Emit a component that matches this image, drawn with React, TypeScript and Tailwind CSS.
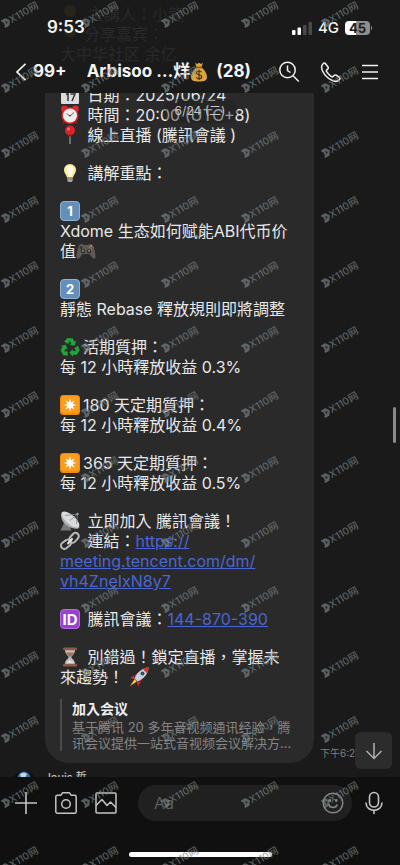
import type { ReactNode } from 'react'

function Emoji({ label, children }: { label: string; children: ReactNode }) {
  return (
    <svg viewBox="0 0 20 20" role="img" aria-label={label} className="mr-[3px] inline-block size-5 align-top">
      {children}
    </svg>
  )
}

function Calendar() {
  return (
    <Emoji label="calendar">
      <rect x="1" y="1" width="18" height="18" rx="1" fill="#dcdcdc" />
      <rect x="1" y="1" width="18" height="5" fill="#c8372f" />
      <path d="M6 9.500l2-1V16M10.500 9h4.500l-3 7" fill="none" stroke="#333" strokeWidth="1.500" />
    </Emoji>
  )
}

function AlarmClock() {
  return (
    <Emoji label="alarm clock">
      <path d="M4.500 15.500L3 19M15.500 15.500L17 19" stroke="#8c1a1c" strokeWidth="2" />
      <circle cx="4.500" cy="4" r="3.400" fill="#d92a2e" />
      <circle cx="15.500" cy="4" r="3.400" fill="#d92a2e" />
      <circle cx="10" cy="10.500" r="8.600" fill="#d3262b" />
      <circle cx="10" cy="10.500" r="7" fill="#f1eeee" />
      <path d="M6.500 8.500l3.500 2.500 4-3.500" fill="none" stroke="#555" strokeWidth="0.900" />
      <circle cx="10" cy="10.800" r="0.800" fill="#222" />
    </Emoji>
  )
}

function Pin() {
  return (
    <Emoji label="pin">
      <path d="M10 9v10" stroke="#9a9a9a" strokeWidth="1.200" />
      <circle cx="10" cy="5.500" r="5" fill="#d8232a" />
      <circle cx="8.500" cy="4" r="1.600" fill="#f0696d" />
      <path d="M8 9.500h4l-.5 2h-3z" fill="#a5171d" />
    </Emoji>
  )
}

function Bulb() {
  return (
    <Emoji label="light bulb">
      <path d="M10 1a6 6 0 0 0-6 6.200c0 3 2.600 4.500 3 7.300h6c.4-2.800 3-4.300 3-7.300A6 6 0 0 0 10 1z" fill="#fbe99a" />
      <path d="M10 2.500a4 4 0 0 0-3.500 5C7 10 8.500 11 9 14h2c.5-3 2-4 2.500-6.500a4 4 0 0 0-3.500-5z" fill="#fffbe0" />
      <path d="M7.300 14.500h5.400v3.200L11.500 19h-3l-1.200-1.300z" fill="#a8a59b" />
      <path d="M7.300 16h5.400" stroke="#6e6b64" strokeWidth="0.700" />
    </Emoji>
  )
}

function Keycap({ n }: { n: string }) {
  return (
    <span className="mr-[3px] inline-flex size-5 items-center justify-center rounded border border-[#8fb2d2] bg-[#648fb8] align-top text-[13px] leading-none font-bold text-white">
      {n}
    </span>
  )
}

function Gamepad() {
  return (
    <Emoji label="game controller">
      <path d="M4 3.500C5.500 2.500 7 3 7.500 4h5c.5-1 2-1.500 3.500-.5 2 1.500 3.500 9 3.500 12.500 0 2-2 2.300-3.200.7L13.500 13h-7l-2.800 3.700C2.500 18.300.5 18 .5 16 .5 12.500 2 5 4 3.500z" fill="#5d5a55" />
      <circle cx="7" cy="10" r="2.200" fill="#2d2b29" />
      <circle cx="13" cy="10" r="2.200" fill="#2d2b29" />
      <circle cx="7" cy="9.700" r="1.200" fill="#77736d" />
      <circle cx="13" cy="9.700" r="1.200" fill="#77736d" />
      <path d="M3.500 6.800h3M5 5.300v3" stroke="#2d2b29" strokeWidth="1" />
      <circle cx="15.200" cy="4.800" r="0.900" fill="#c99a3c" />
      <circle cx="17" cy="6.500" r="0.900" fill="#b84a35" />
      <circle cx="13.500" cy="6.300" r="0.900" fill="#c76a3f" />
      <circle cx="15.200" cy="8" r="0.800" fill="#678a57" />
    </Emoji>
  )
}

function Recycle() {
  return (
    <Emoji label="recycle">
      <g fill="#1fa43a">
        <path d="M7 1.300h5.600l2 3.500 1.700-.9-1.700 4.900-5-1.100 1.700-1-1.500-2.700-1.800 3-3.700-2.200z" />
        <path d="M7 1.300h5.600l2 3.500 1.700-.9-1.700 4.900-5-1.100 1.700-1-1.500-2.700-1.800 3-3.700-2.200z" transform="rotate(120 10 10.800)" />
        <path d="M7 1.300h5.600l2 3.500 1.700-.9-1.700 4.900-5-1.100 1.700-1-1.500-2.700-1.800 3-3.700-2.200z" transform="rotate(240 10 10.800)" />
      </g>
    </Emoji>
  )
}

function Star() {
  return (
    <Emoji label="eight-pointed star">
      <rect x="0" y="0" width="20" height="20" rx="3.500" fill="#f08a12" />
      <rect x="1" y="1" width="18" height="17" rx="3" fill="#fb9d1f" />
      <path d="M10 3.500l1.100 3.800 3.500-1.900-1.900 3.500 3.800 1.100-3.800 1.100 1.900 3.500-3.500-1.900L10 16.500l-1.100-3.800-3.500 1.900 1.900-3.500L3.500 10l3.800-1.100-1.900-3.500 3.500 1.900z" fill="#fff" />
    </Emoji>
  )
}

function Satellite() {
  return (
    <Emoji label="satellite antenna">
      <path d="M4 12l-3.500 7.500h11L9 14z" fill="#77797c" />
      <path d="M2 .8C-.8 6 3 16.500 15.500 17.800c2 .2 3.800-.5 4-1.800z" fill="#a9abad" />
      <ellipse cx="10.500" cy="8.500" rx="11" ry="4.600" transform="rotate(41 10.500 8.500)" fill="#d9dadb" />
      <path d="M10 9.500L17.500 3M5 4.500L17.500 3l-1 10" fill="none" stroke="#85878a" strokeWidth="0.800" />
      <circle cx="17.500" cy="3" r="1.200" fill="#a0a2a4" />
    </Emoji>
  )
}

function LinkIcon() {
  return (
    <Emoji label="link">
      <g fill="none" stroke="#b9babb" strokeWidth="2">
        <rect x="8.500" y="3.500" width="11" height="6.600" rx="3.300" transform="rotate(-48 14 6.800)" />
        <rect x="0.500" y="10" width="11" height="6.600" rx="3.300" transform="rotate(-38 6 13.300)" />
      </g>
      <path d="M8 12.500l4-4.500" stroke="#e4e4e4" strokeWidth="2" strokeLinecap="round" />
    </Emoji>
  )
}

function IdBadge() {
  return (
    <span className="mr-[3px] inline-flex size-5 items-center justify-center rounded border border-[#b36be0] bg-[#9a3fd0] align-top text-[15px] leading-none font-bold text-white">
      ID
    </span>
  )
}

function Hourglass() {
  return (
    <Emoji label="hourglass">
      <path d="M5 3h10c0 4-3 5.500-3.800 7.200C12 12 15 13 15 17H5c0-4 3-5 3.800-6.800C8 8.500 5 7 5 3z" fill="#b9c0c3" />
      <path d="M6 5.500h8c-.5 2-2.500 3-4 4.500C8.500 8.500 6.500 7.500 6 5.500z" fill="#a86e50" />
      <path d="M6 16.500c.5-2 2.500-2 4-3.500 1.500 1.500 3.500 1.500 4 3.500z" fill="#e6e1da" />
      <rect x="3" y="0.500" width="14" height="2.800" rx="1.200" fill="#8d5a43" />
      <rect x="3" y="16.700" width="14" height="2.800" rx="1.200" fill="#8d5a43" />
    </Emoji>
  )
}

function Rocket() {
  return (
    <Emoji label="rocket">
      <path d="M5 8.500L1 11l4.500 1zM11.500 15L9 19.500 8 14.500z" fill="#d8312b" />
      <path d="M5.500 8.500L10 5l2 2-5 4zM11.500 14.500l3.500-4.500-2-2-4 5z" fill="#cf2d2b" />
      <path d="M19.500.5C14 .5 8.500 4.500 5.500 11.500l3 3C15.500 11.500 19.500 6 19.500.5z" fill="#c4d3df" />
      <path d="M19.500.5c-2 0-4 .5-5.700 1.500l4.200 4.200c1-1.700 1.500-3.700 1.500-5.700z" fill="#d8312b" />
      <circle cx="13.500" cy="6.500" r="2" fill="#334d68" />
      <path d="M5.500 12L.8 19.200 8 14.500z" fill="#f79a1c" />
      <path d="M5.800 13L3 17l4-2.500z" fill="#ffe14d" />
    </Emoji>
  )
}

function MoneyBag() {
  return (
    <svg viewBox="0 0 18 20" role="img" aria-label="money bag" className="h-5 w-[18px] shrink-0">
      <path d="M5 .8l2 1.200 2-1.200 2 1.200 2-1.200-1.600 4.700c3 2 5.600 6 5.600 9.500 0 3.200-2 4.500-8 4.500s-8-1.300-8-4.500C1 11.500 3.600 7.500 6.600 5.500z" fill="#d9a441" />
      <path d="M6 5.500h6" stroke="#8a5a1a" strokeWidth="1.500" />
      <path d="M11.500 10.300c-.6-1-1.400-1.300-2.500-1.300-1.500 0-2.500.7-2.500 1.900 0 2.800 5.200 1.200 5.200 3.900 0 1.300-1.200 2-2.700 2-1.400 0-2.300-.5-2.800-1.500M9 7.800v10.200" fill="none" stroke="#4d3208" strokeWidth="1.200" />
    </svg>
  )
}

function StatusBar() {
  return (
    <div className="flex h-14 items-center justify-between pr-7 pl-[47px]">
      <span className="text-[17px] font-semibold">9:53</span>
      <div className="flex items-center gap-1.5">
        <svg viewBox="0 0 20 13" className="h-[13px] w-5">
          <rect x="0" y="8" width="3.500" height="5" rx="1" fill="#fff" />
          <rect x="5.500" y="5.500" width="3.500" height="7.500" rx="1" fill="#fff" />
          <rect x="11" y="3" width="3.500" height="10" rx="1" fill="#4a4a4a" />
          <rect x="16.500" y="0" width="3.500" height="13" rx="1" fill="#4a4a4a" />
        </svg>
        <span className="text-[15px] font-medium">4G</span>
        <div className="flex items-center gap-px">
          <span className="flex h-[14px] w-[25px] items-center justify-center rounded bg-linear-to-r from-white from-45% to-[#8e8e8e] to-45% text-[13px] leading-none font-bold text-[#1c1c1c]">
            45
          </span>
          <span className="h-1 w-px rounded-r bg-[#8e8e8e]" />
        </div>
      </div>
    </div>
  )
}

function Header() {
  return (
    <header className="relative h-[93px] shrink-0 bg-[#1a1a1a]">
      {/* Earlier lines of the message showing faintly through the bar */}
      <div aria-hidden="true" className="absolute top-1 left-[60px] text-base leading-5 text-[#292929]">
        <p className="pl-7">主講人：小龍</p>
        <p className="pl-6">分享嘉宾：</p>
        <p>大中华社区 余亿</p>
        <svg viewBox="0 0 20 40" className="absolute top-0 left-0 h-10 w-5">
          <circle cx="10" cy="7" r="6" fill="#28241a" />
          <circle cx="10" cy="28" r="6" fill="#28241a" />
        </svg>
      </div>

      <div className="relative">
        <StatusBar />
        <nav className="flex h-8 items-center pr-[22px] pl-4 text-[17px] font-bold">
          <button aria-label="Back" className="flex items-center gap-[7px]">
            <svg viewBox="0 0 10 18" className="h-[18px] w-2.5" fill="none" stroke="#f4f4f4" strokeWidth="1.700">
              <path d="M9.500 .8L1 9l8.500 8.200" />
            </svg>
            99+
          </button>
          <h1 className="ml-5 flex flex-1 items-center whitespace-nowrap">
            <span>Arbisoo …烊</span>
            <MoneyBag />
            <span className="ml-2">(28)</span>
          </h1>
          <div className="flex items-center gap-5">
            <button aria-label="Search">
              <svg viewBox="0 0 22 22" className="size-[22px]" fill="none" stroke="#f0f0f0" strokeWidth="1.500">
                <circle cx="9.500" cy="9" r="7.700" />
                <path d="M15 14.800l5.800 5.700M9.500 4.500v5l3 2" />
              </svg>
            </button>
            <button aria-label="Call">
              <svg viewBox="0 0 22 22" className="size-[22px]" fill="none" stroke="#f0f0f0" strokeWidth="1.500" strokeLinejoin="round">
                <path d="M3.300 2.500C1.200 4.300 1 7 2.800 10.500c2 3.800 5 6.800 8.700 8.700 3.500 1.800 6.200 1.500 8-.7.600-.8.500-1.500-.3-2.100l-3-2.200c-.8-.5-1.400-.4-2 .2l-1.100 1.100c-.5.500-1 .5-1.600.1-2-1.300-3.600-2.900-4.900-4.900-.4-.6-.4-1.100.1-1.600l1.100-1.100c.6-.6.700-1.200.2-2L5.500 2.700c-.6-.8-1.400-.9-2.200-.2z" />
              </svg>
            </button>
            <button aria-label="Menu">
              <svg viewBox="0 0 16 16" className="size-4" stroke="#f0f0f0" strokeWidth="1.700">
                <path d="M0 1.500h16M0 8h16M0 14.500h16" />
              </svg>
            </button>
          </div>
        </nav>
      </div>
    </header>
  )
}

const plans = [
  { term: '活期質押', rate: '0.3%', icon: <Recycle /> },
  { term: '180 天定期質押', rate: '0.4%', icon: <Star /> },
  { term: '365 天定期質押', rate: '0.5%', icon: <Star /> },
]

function Message() {
  return (
    <article className="ml-[45px] w-[269px] shrink-0 rounded-b-3xl bg-[#2a2a2a] pr-4 pb-3 pl-[15px]">
      <div className="-mt-2 space-y-[18px] text-base leading-5 text-[#e8e8e8]">
        <p>
          <Calendar /> 日期：2025/06/24
          <br />
          <AlarmClock /> 時間：20:00 (UTC+8)
          <br />
          <Pin /> 線上直播 (騰訊會議 )
        </p>
        <p>
          <Bulb /> 講解重點：
        </p>
        <p>
          <Keycap n="1" />
          <br />
          Xdome 生态如何赋能ABI代币价
          <br />值
          <Gamepad />
        </p>
        <p>
          <Keycap n="2" />
          <br />
          靜態 Rebase 釋放規則即將調整
        </p>
        {plans.map((plan) => (
          <p key={plan.term}>
            {plan.icon}
            {plan.term}：
            <br />每 12 小時釋放收益 {plan.rate}
          </p>
        ))}
        <p>
          <Satellite /> 立即加入 騰訊會議！
          <br />
          <LinkIcon /> 連結：
          <a href="https://meeting.tencent.com/dm/vh4ZneIxN8y7" className="text-[#4a66d4] underline">
            https://
            <br />
            meeting.tencent.com/dm/
            <br />
            vh4ZneIxN8y7
          </a>
        </p>
        <p>
          <IdBadge /> 騰訊會議：
          <a href="tel:144870390" className="text-[#4a66d4] underline">
            144-870-390
          </a>
        </p>
        <p>
          <Hourglass /> 別錯過！鎖定直播，掌握未
          <br />
          來趨勢！ <Rocket />
        </p>
      </div>

      {/* Link preview */}
      <div className="mt-3 border-l-2 border-[#4a4a4a] pl-2.5">
        <p className="text-sm leading-5 font-bold text-[#f0f0f0]">加入会议</p>
        <p className="text-[13px] leading-4 whitespace-nowrap text-[#858585]">
          基于腾讯 20 多年音视频通讯经验，腾
          <br />
          讯会议提供一站式音视频会议解决方…
        </p>
      </div>
    </article>
  )
}

function Chat() {
  return (
    <main className="relative flex min-h-0 flex-1 flex-col overflow-hidden bg-[#1a1a1a]">
      <div className="flex items-end">
        <Message />
        <time className="ml-1.5 text-[10px] leading-5 whitespace-nowrap text-[#808080]">下午6:23</time>
      </div>
      <div className="mt-2 flex shrink-0 items-start gap-3 pl-3">
        <svg viewBox="0 0 24 24" className="size-6">
          <circle cx="12" cy="12" r="12" fill="#0b0f18" />
          <circle cx="12" cy="7" r="6.500" fill="#3c6fa0" />
          <path d="M8 3l4-1.500L15 3l-2 4H9z" fill="#c5d8e6" />
        </svg>
        <span className="text-[11px] leading-3 font-medium text-[#c0c0c0]">louis 哲</span>
      </div>

      <span className="absolute top-1.5 left-1/2 -translate-x-1/2 rounded-full bg-[#1e1e1e]/40 px-3 py-1 text-xs text-[#c8c8c8]">
        6/24 (二)
      </span>
      <span className="absolute top-[314px] right-1 h-9 w-[3px] rounded-full bg-[#8a8a8a]" />
      <button
        aria-label="Scroll to bottom"
        className="absolute right-2 bottom-2 flex size-[37px] items-center justify-center rounded-md bg-[#2c2c2c]"
      >
        <svg viewBox="0 0 18 18" className="size-[18px]" fill="none" stroke="#b0b0b0" strokeWidth="1.500">
          <path d="M9 1v15.500M1.500 9L9 16.500 16.500 9" />
        </svg>
      </button>
    </main>
  )
}

function Composer() {
  return (
    <footer className="flex h-[88px] shrink-0 flex-col justify-between bg-[#101010] pt-2 pb-2">
      <div className="flex items-center pr-4 pl-3.5">
        <div className="flex items-center gap-4">
          <button aria-label="More">
            <svg viewBox="0 0 24 24" className="size-6" stroke="#c4c4c4" strokeWidth="1.600">
              <path d="M1 12h22M12 1v22" />
            </svg>
          </button>
          <button aria-label="Camera">
            <svg viewBox="0 0 24 24" className="size-6" fill="none" stroke="#c4c4c4" strokeWidth="1.500" strokeLinejoin="round">
              <path d="M3.300 4.200h3.600L8.500 1.800h7l1.600 2.400h3.600a1.500 1.500 0 0 1 1.500 1.500v15a1.500 1.500 0 0 1-1.500 1.500H3.300a1.500 1.500 0 0 1-1.500-1.500v-15a1.500 1.500 0 0 1 1.500-1.500z" />
              <circle cx="12" cy="13" r="4.300" />
            </svg>
          </button>
          <button aria-label="Photos">
            <svg viewBox="0 0 24 24" className="size-6" fill="none" stroke="#c4c4c4" strokeWidth="1.500" strokeLinejoin="round">
              <rect x="2" y="2" width="20" height="20" rx="1" />
              <path d="M2 14.500l6-6 5 6 3.500-3.500 5.500 5.500" />
            </svg>
          </button>
        </div>
        <div className="mr-3 ml-5 flex h-9 min-w-0 flex-1 items-center rounded-full bg-[#202020] pr-2 pl-4">
          <input
            type="text"
            aria-label="Message"
            placeholder="Aa"
            className="min-w-0 flex-1 bg-transparent text-base outline-none placeholder:text-[#5c5c5c]"
          />
          <button aria-label="Emoji">
            <svg viewBox="0 0 22 22" className="size-[22px]" fill="none" stroke="#858585" strokeWidth="1.500">
              <circle cx="11" cy="11" r="9.800" />
              <path d="M6.800 12.500c1 4 7.400 4 8.400 0" />
              <circle cx="7.800" cy="8.500" r="0.700" fill="#858585" />
              <circle cx="14.200" cy="8.500" r="0.700" fill="#858585" />
            </svg>
          </button>
        </div>
        <button aria-label="Voice message">
          <svg viewBox="0 0 20 24" className="h-6 w-5" fill="none" stroke="#c4c4c4" strokeWidth="1.600">
            <rect x="5.500" y="1.500" width="9" height="14.500" rx="4.500" />
            <path d="M2 11.500c0 10.500 16 10.500 16 0M10 19.500V23" />
          </svg>
        </button>
      </div>
      <div className="mx-auto h-[5px] w-[143px] rounded-full bg-white" />
    </footer>
  )
}

function Watermark() {
  return (
    <div
      aria-hidden="true"
      className="pointer-events-none absolute inset-0 grid auto-rows-[65px] grid-cols-5 overflow-hidden text-[#7c878a] opacity-65"
    >
      {Array.from({ length: 70 }, (_, i) => (
        <div key={i} className="flex h-[27px] w-10 items-center justify-center">
          <span className="flex -rotate-30 items-center text-[10px] leading-none font-medium">
            <svg viewBox="0 0 9 10" className="h-[9px] w-2" fill="currentColor" fillRule="evenodd">
              <path d="M0 0h5.500L9 5 5.500 10H0V7.500h1.500v-5H0zM3.800 3v4L6 5z" />
            </svg>
            X110网
          </span>
        </div>
      ))}
    </div>
  )
}

export default function App() {
  return (
    <div
      lang="zh-Hant"
      className="relative flex h-screen flex-col overflow-hidden bg-[#1a1a1a] font-[Inter,'Noto_Sans_CJK_TC',sans-serif] text-[#f4f4f4]"
    >
      <Header />
      <Chat />
      <Composer />
      <Watermark />
    </div>
  )
}
